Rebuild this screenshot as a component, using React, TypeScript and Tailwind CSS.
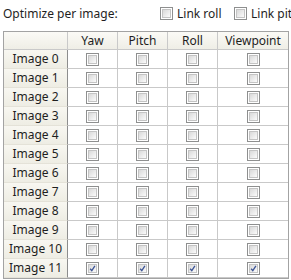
import React from 'react';

const columns = ['Yaw', 'Pitch', 'Roll', 'Viewpoint'];
const rows = Array.from({ length: 12 }, (_, i) => `Image ${i}`);

function Box({ checked }: { checked?: boolean }) {
    return (
        <div className="w-[13px] h-[13px] shrink-0 border border-[#8e8f8f] bg-white p-px">
            <div className="w-full h-full border border-[#c4c4c4] bg-gradient-to-br from-[#d9d9d9] to-[#fbfbfb] flex items-center justify-center">
                {checked && (
                    <svg width="9" height="9" viewBox="0 0 9 9">
                        <path d="M1.5 4.8 L3.6 7.2 L7.6 1.2" stroke="#3d5596" strokeWidth="1.7" fill="none" />
                    </svg>
                )}
            </div>
        </div>
    );
}

export default function App() {
    return (
        <div className="w-[291px] h-[280px] bg-white overflow-hidden text-[12px] text-[#1e1e1e]" style={{ fontFamily: '"Noto Sans", "Segoe UI", sans-serif' }}>
            <div className="h-[31px] flex items-center pl-[3px] pb-[4px] whitespace-nowrap">
                <span className="w-[157px] shrink-0">Optimize per image:</span>
                <div className="flex items-center gap-[4px] w-[74px] shrink-0">
                    <Box />
                    <span>Link roll</span>
                </div>
                <div className="flex items-center gap-[4px] shrink-0">
                    <Box />
                    <span>Link pitch</span>
                </div>
            </div>
            <div className="ml-[3px] w-[286px] border border-[#a3a3a3]">
                <div className="grid grid-cols-[64px_50px_50px_50px_70px]">
                    <div className="h-[18px] border-r border-b border-[#c9c9c9] bg-gradient-to-b from-[#fbfaf6] to-[#efeee6]" />
                    {columns.map((c, i) => (
                        <div
                            key={c}
                            className={`h-[18px] flex items-center justify-center border-b border-[#c9c9c9] bg-gradient-to-b from-[#fbfaf6] to-[#efeee6] ${i < columns.length - 1 ? 'border-r' : ''}`}
                        >
                            {c}
                        </div>
                    ))}
                    {rows.map((r, ri) => (
                        <React.Fragment key={r}>
                            <div className="h-[19px] flex items-center justify-center border-r border-r-[#8d8d8d] border-b border-b-[#e4e2d8] bg-gradient-to-b from-[#f8f7f1] to-[#eeede4]">
                                {r}
                            </div>
                            {columns.map((c, i) => (
                                <div
                                    key={c}
                                    className={`h-[19px] flex items-center justify-center border-b border-[#c9c9c9] ${i < columns.length - 1 ? 'border-r' : ''}`}
                                >
                                    <Box checked={ri === 11} />
                                </div>
                            ))}
                        </React.Fragment>
                    ))}
                </div>
            </div>
        </div>
    );
}
